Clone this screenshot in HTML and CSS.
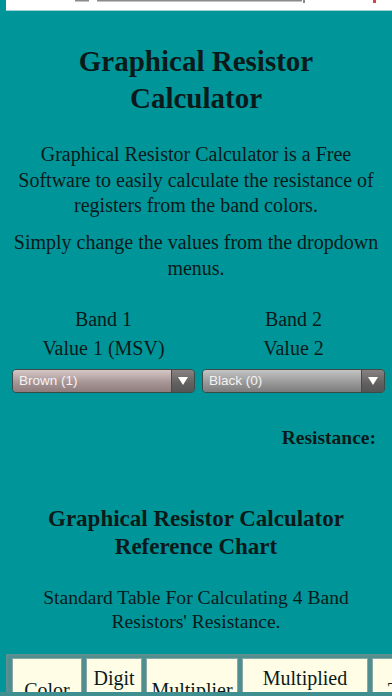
FILE: index.html
```html
<!DOCTYPE html>
<html lang="en">
<head>
    <meta charset="UTF-8">
    <meta name="viewport" content="width=device-width, initial-scale=1.0">
    <title>Graphical Resistor Calculator</title>
    <link rel="stylesheet" href="styles.css">
</head>
<body>

    <div class="banner">
        <svg width="386" height="10" viewBox="0 0 386 10">
            <rect x="69" y="0" width="14" height="1.5" fill="#8a8a8a"/>
            <rect x="91" y="0" width="205" height="1.5" fill="#8a8a8a"/>
            <rect x="297" y="0" width="2" height="3" fill="#8a8a8a"/>
            <rect x="367" y="0" width="3" height="3" fill="#e04040"/>
        </svg>
    </div>

    <h1 class="title">Graphical Resistor Calculator</h1>

    <p class="intro">Graphical Resistor Calculator is a Free Software to easily calculate the resistance of registers from the band colors.</p>
    <p class="intro second">Simply change the values from the dropdown menus.</p>

    <div class="bands">
        <div class="band">
            <div class="band-label">Band 1</div>
            <div class="band-label">Value 1 (MSV)</div>
            <div class="select brown">
                <span class="select-text">Brown (1)</span>
                <span class="select-arrow"></span>
            </div>
        </div>
        <div class="band">
            <div class="band-label">Band 2</div>
            <div class="band-label">Value 2</div>
            <div class="select black">
                <span class="select-text">Black (0)</span>
                <span class="select-arrow"></span>
            </div>
        </div>
    </div>

    <div class="resistance">Resistance:</div>

    <h2 class="chart-title">Graphical Resistor Calculator Reference Chart</h2>
    <p class="chart-text">Standard Table For Calculating 4 Band Resistors' Resistance.</p>

    <div class="chart-wrap">
        <table class="chart">
            <tr>
                <th class="col-color">Color</th>
                <th class="col-digit">Digit<br>Value</th>
                <th class="col-mult">Multiplier</th>
                <th class="col-multd">Multiplied<br>Value</th>
                <th class="col-tol">Tolerance</th>
            </tr>
        </table>
    </div>

    <div class="bottom-edge"></div>

</body>
</html>
```

FILE: styles.css
```css
body {
    margin: 0;
    background-color: #009699;
    color: #0a1a1a;
    font-family: "Liberation Serif", "Times New Roman", serif;
    overflow-x: hidden;
}

.banner {
    margin-left: 6px;
    height: 10px;
    background-color: #fff;
    border-bottom: 1px solid #9fd3d4;
}

.banner svg {
    display: block;
}

.title {
    font-size: 29px;
    line-height: 37px;
    font-weight: bold;
    text-align: center;
    margin: 32px 50px 0;
}

.intro {
    font-size: 20px;
    line-height: 25.5px;
    text-align: center;
    margin: 25px 12px 0;
}

.intro.second {
    margin-top: 11.5px;
}

.bands {
    display: grid;
    grid-template-columns: 183px 183px;
    column-gap: 7px;
    padding-left: 12px;
    margin-top: 24px;
}

.band-label {
    font-size: 20px;
    line-height: 29px;
    text-align: center;
}

.select {
    display: flex;
    height: 22px;
    margin-top: 6px;
    border: 1px solid #3c4a4a;
    border-radius: 4px;
    overflow: hidden;
    font-family: "Liberation Sans", Arial, sans-serif;
    font-size: 13.5px;
    color: #f6f2f2;
}

.select-text {
    flex: 1;
    line-height: 22px;
    padding-left: 6px;
}

.select.brown .select-text {
    background: linear-gradient(#d6c8c8, #a89696 55%, #8f7d7d);
}

.select.black .select-text {
    background: linear-gradient(#c4c4c4, #9a9a9a 55%, #7c7c7c);
}

.select-arrow {
    width: 22px;
    position: relative;
    border-left: 1px solid #4a4a4a;
    background: linear-gradient(#8a8282, #626060 60%, #555);
}

.select-arrow::after {
    content: "";
    position: absolute;
    left: 6px;
    top: 7px;
    border-left: 5px solid transparent;
    border-right: 5px solid transparent;
    border-top: 8px solid #fff;
}

.resistance {
    font-size: 19.5px;
    line-height: 26px;
    font-weight: bold;
    text-align: right;
    padding-right: 16px;
    margin-top: 32px;
}

.chart-title {
    font-size: 23px;
    line-height: 28px;
    font-weight: bold;
    text-align: center;
    margin: 54px 30px 0;
}

.chart-text {
    font-size: 19.6px;
    line-height: 24px;
    text-align: center;
    margin: 25px 30px 0;
}

.chart-wrap {
    margin: 20px 0 0 6px;
    width: 386px;
    overflow: hidden;
}

.chart {
    width: 482px;
    border: 2px solid #5d8f90;
    border-spacing: 4px 2px;
    background-color: #4f8f90;
    table-layout: fixed;
}

.chart th {
    background-color: #fffde6;
    border: 1px solid #8aa6a6;
    font-weight: normal;
    font-size: 20px;
    line-height: 24px;
    padding: 7px 4px;
    text-align: center;
    vertical-align: middle;
}

.col-color { width: 60px; }
.col-digit { width: 46px; }
.col-mult { width: 82px; }
.col-multd { width: 116px; }
.col-tol { width: 100px; }

.bottom-edge {
    position: fixed;
    left: 0;
    right: 0;
    bottom: 0;
    height: 4px;
    background-color: #3f8e90;
}
```
